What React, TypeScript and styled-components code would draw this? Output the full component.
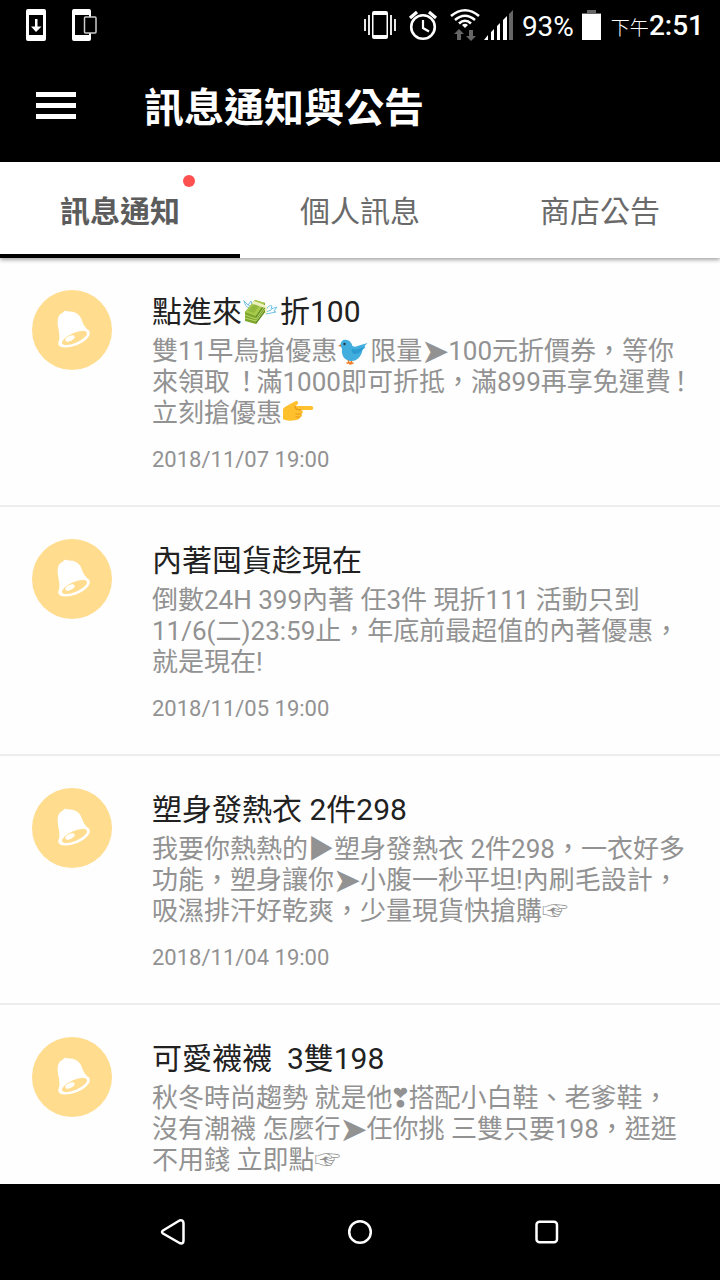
import React from "react";
import styled, { createGlobalStyle } from "styled-components";

const GlobalStyle = createGlobalStyle`
  * { box-sizing: border-box; }
  body {
    margin: 0;
    background: #000;
    font-family: Roboto, "Noto Sans CJK TC", "DejaVu Sans", sans-serif;
  }
`;

const Screen = styled.div`
  display: flex;
  flex-direction: column;
  height: 100vh;
  background: #fefefe;
`;

const StatusBar = styled.div`
  display: flex;
  align-items: center;
  justify-content: space-between;
  flex: none;
  height: 50px;
  padding: 0 16px 0 24px;
  background: #000;
  color: #fff;
  svg { display: block; flex: none; }
`;

const StatusGroup = styled.div<{ $gap: number }>`
  display: flex;
  align-items: center;
  gap: ${(p) => p.$gap}px;
`;

const StatusText = styled.span`
  padding-top: 4px;
  font-size: 28px;
  line-height: 32px;
`;

const Clock = styled.time`
  display: flex;
  align-items: baseline;
  padding: 4px 0 0 2px;
  font-size: 28px;
  line-height: 32px;
  font-weight: 500;
`;

const Meridiem = styled.span`
  font-size: 19px;
  font-weight: 300;
`;

const AppBar = styled.header`
  display: flex;
  align-items: center;
  gap: 68px;
  flex: none;
  height: 112px;
  padding: 0 36px;
  background: #000;
  color: #fff;
`;

const IconButton = styled.button`
  display: grid;
  place-items: center;
  padding: 0;
  border: 0;
  background: none;
  color: inherit;
  cursor: pointer;
  svg { display: block; }
`;

const PageTitle = styled.h1`
  margin: 0;
  padding-top: 6px;
  font-size: 40px;
  line-height: 56px;
  font-weight: 700;
`;

const Tabs = styled.nav`
  position: relative;
  z-index: 1;
  display: flex;
  flex: none;
  height: 96px;
  background: #fff;
  box-shadow: 0 2px 4px rgba(0, 0, 0, 0.35);
`;

const Tab = styled.button<{ $active?: boolean }>`
  flex: 1;
  padding: 4px 0 0;
  border: 0;
  border-top: 4px solid transparent;
  border-bottom: 4px solid ${(p) => (p.$active ? "#000" : "transparent")};
  background: none;
  color: ${(p) => (p.$active ? "#5c5c5c" : "#6a6a6a")};
  font-family: inherit;
  font-size: 30px;
  line-height: 40px;
  font-weight: ${(p) => (p.$active ? 700 : 400)};
  cursor: pointer;
`;

const TabLabel = styled.span`
  position: relative;
`;

const UnreadDot = styled.span`
  position: absolute;
  top: -19px;
  right: -15px;
  width: 12px;
  height: 12px;
  border-radius: 50%;
  background: #ff5050;
`;

const List = styled.ul`
  flex: 1;
  min-height: 0;
  margin: 0;
  padding: 0;
  overflow-y: auto;
  scrollbar-width: none;
  list-style: none;
`;

const Item = styled.li`
  display: flex;
  gap: 40px;
  padding: 32px 28px 31px 32px;
  border-bottom: 2px solid #ededed;
`;

const Avatar = styled.svg`
  flex: none;
  width: 80px;
  height: 80px;
`;

const Content = styled.div`
  flex: 1;
  min-width: 0;
`;

const ItemTitle = styled.h2`
  margin: 0 0 2px;
  color: #212121;
  font-size: 30px;
  line-height: 44px;
  font-weight: 400;
  white-space: pre-wrap;
`;

const Message = styled.p`
  margin: 0;
  color: #929292;
  font-size: 26px;
  line-height: 31px;
`;

const ItemDate = styled.time`
  display: block;
  margin-top: 17px;
  color: #929292;
  font-size: 22px;
  line-height: 28px;
`;

const Glyph = styled.span<{ $width: number; $size?: number }>`
  display: inline-flex;
  justify-content: center;
  width: ${(p) => p.$width}px;
  height: 31px;
  font-size: ${(p) => p.$size ?? 26}px;
  line-height: 31px;
  vertical-align: top;
`;

const Emoji = styled.svg<{ $size: number }>`
  width: ${(p) => p.$size}px;
  height: ${(p) => p.$size}px;
  margin: -8px 0;
  vertical-align: 1px;
`;

const NavBar = styled.nav`
  display: flex;
  align-items: center;
  justify-content: center;
  gap: 147px;
  flex: none;
  height: 96px;
  background: #000;
  color: #fff;
`;

const Arrow = () => <Glyph $width={26} $size={34}>➤</Glyph>;
const Bang = () => <Glyph $width={20}>！</Glyph>;
const Pointer = () => <Glyph $width={26}>☞</Glyph>;

const MoneyEmoji = () => (
  <Emoji $size={38} viewBox="0 0 38 38" role="img" aria-label="💸">
    <g fill="none" stroke="#6fc3e6" strokeWidth="1" strokeLinecap="round">
      <path d="M2 10l4 4 3-4 1 4M2 10c1 4 2 6 5 7M5 13l4 3" />
      <path d="M24 19c2-4 4-5 6-4l-1 3 6-2-3 4 2 1-5 1-5 1M24 21l5-2" />
    </g>
    <path d="M3 21L13 9l10 3v9l-9 12-11-3z" fill="#7ea62f" />
    <path d="M3 21L13 9l10 3-9 13z" fill="#a8ca4c" />
    <path d="M14 25l9-13v9l-9 12z" fill="#658f27" />
    <path d="M3 24l11 4 9-13M3 27l11 3 9-12" stroke="#bcd866" strokeWidth="1" fill="none" />
    <path d="M10 13l2-3 11 4 2 2v6l-2 2v-7z" fill="#eef0c0" />
    <path d="M6 20l6-7 5 2-5 7z" fill="#7ea62f" opacity="0.500" />
  </Emoji>
);

const BirdEmoji = () => (
  <Emoji $size={33} viewBox="0 0 33 33" role="img" aria-label="🐦">
    <path d="M11 25l1 4M15 25l-1 4M10 29h3M13 30l3-1" stroke="#f57c20" strokeWidth="1.500" strokeLinecap="round" fill="none" />
    <path d="M4 10l-3 2 4 1z" fill="#e8782a" />
    <path d="M3.500 11c0-4 3-6 6-5 3 0 5 3 6 6 2 1 3 1 5 0l10-3-3 3 1 1-3 3c-1 6-5 11-11 11C8 27 4 22 5 15z" fill="#42aede" />
    <path d="M15 15c4 1 8 0 12-2-2 4-5 7-9 7-2 0-4-2-3-5z" fill="#2c9bd2" />
    <circle cx="7.500" cy="10" r="1.200" fill="#243642" />
  </Emoji>
);

const HandEmoji = () => (
  <Emoji $size={33} viewBox="0 0 33 33" role="img" aria-label="👉">
    <path d="M1 13c2-3 6-4 9-6l4-2c2 0 3 2 1 4l-2 1h16c3 0 3 4 0 4H19c3 1 2 4 0 4 2 1 1 3-1 3 0 2-2 3-4 3C9 25 4 25 1 23z" fill="#ffc02e" />
    <path d="M13 10c0 3 2 4 6 4M14 18h5M14 21h4" fill="none" stroke="#e59618" strokeWidth="1.2" strokeLinecap="round" />
  </Emoji>
);

const BellAvatar = () => (
  <Avatar viewBox="0 0 80 80" aria-hidden="true">
    <circle cx="40" cy="40" r="40" fill="#ffdc8e" />
    <path
      d="M31 22.500c1-2 3-2 5-1 5-.5 9 1 12 5 3 5 3 10 9 14 2 3 0 7-4 10-5 4-13 7-20 7-6 0-8-3-6-7 1-3 0-9-1-14-1-7 0-12 5-14z"
      fill="#fff"
    />
    <ellipse cx="42.500" cy="48" rx="13.500" ry="5" transform="rotate(-24 42.500 48)" fill="#ffdc8e" />
    <ellipse cx="38" cy="48.500" rx="5" ry="2.500" transform="rotate(-26 38 48.500)" fill="#fff" />
  </Avatar>
);

type Notice = {
  id: number;
  title: React.ReactNode;
  body: React.ReactNode;
  date?: string;
};

const notices: Notice[] = [
  {
    id: 1,
    title: <>點進來<MoneyEmoji />折100</>,
    body: (
      <>
        雙11早鳥搶優惠<BirdEmoji />限量<Arrow />100元折價券，等你來領取 <Bang />滿1000即可折抵，滿899再享免運費<Bang />立刻搶優惠<HandEmoji />
      </>
    ),
    date: "2018/11/07 19:00",
  },
  {
    id: 2,
    title: "內著囤貨趁現在",
    body: "倒數24H 399內著 任3件 現折111 活動只到11/6(二)23:59止，年底前最超值的內著優惠，就是現在!",
    date: "2018/11/05 19:00",
  },
  {
    id: 3,
    title: "塑身發熱衣 2件298",
    body: (
      <>
        我要你熱熱的<Glyph $width={26}>▶</Glyph>塑身發熱衣 2件298，一衣好多功能，塑身讓你<Arrow />小腹一秒平坦!內刷毛設計，吸濕排汗好乾爽，少量現貨快搶購<Pointer />
      </>
    ),
    date: "2018/11/04 19:00",
  },
  {
    id: 4,
    title: "可愛襪襪  3雙198",
    body: (
      <>
        秋冬時尚趨勢 就是他<Glyph $width={16}>❣</Glyph>搭配小白鞋、老爹鞋，沒有潮襪 怎麼行<Arrow />任你挑 三雙只要198，逛逛不用錢 立即點<Pointer />
      </>
    ),
  },
];

const DownloadIcon = () => (
  <svg width="24" height="34" viewBox="0 0 24 34" aria-hidden="true">
    <path fillRule="evenodd" fill="#fff" d="M4 1h16a2 2 0 0 1 2 2v28a2 2 0 0 1-2 2H4a2 2 0 0 1-2-2V3a2 2 0 0 1 2-2zM5 7v20h14V7z" />
    <path fill="#fff" d="M11 11h2.500v7.500H17.500L12 24 7 18.500h4z" />
  </svg>
);

const DevicesIcon = () => (
  <svg width="28" height="34" viewBox="0 0 28 34" aria-hidden="true">
    <path fillRule="evenodd" fill="#fff" d="M4 1h15a2 2 0 0 1 2 2v28a2 2 0 0 1-2 2H4a2 2 0 0 1-2-2V3a2 2 0 0 1 2-2zM5 7v20h14V7z" />
    <rect x="14.500" y="9" width="11.500" height="16" rx="1" fill="#000" stroke="#ccc" strokeWidth="1.500" />
  </svg>
);

const VibrateIcon = () => (
  <svg width="32" height="32" viewBox="0 0 32 32" aria-hidden="true">
    <path fillRule="evenodd" fill="#fff" d="M10 2h12a2 2 0 0 1 2 2v24a2 2 0 0 1-2 2H10a2 2 0 0 1-2-2V4a2 2 0 0 1 2-2zM9.500 6v20h13V6z" />
    <path d="M1 10v12M5 6v20M27 6v20M31 10v12" stroke="#fff" strokeWidth="1.800" />
  </svg>
);

const AlarmIcon = () => (
  <svg width="30" height="32" viewBox="0 0 30 32" fill="none" stroke="#fff" aria-hidden="true">
    <circle cx="15" cy="18" r="11.800" strokeWidth="2.600" />
    <path d="M2 9l7-6M28 9l-7-6" strokeWidth="3.200" />
    <path d="M15 11v8l6 3.500" strokeWidth="2.200" />
  </svg>
);

const WifiIcon = () => (
  <svg width="30" height="34" viewBox="0 0 30 34" fill="none" aria-hidden="true">
    <g stroke="#fff" strokeWidth="2.600">
      <path d="M1 8Q15-3.500 29 8" />
      <path d="M5 12Q15 3.500 25 12" />
      <path d="M9 15.500Q15 10 21 15.500" />
    </g>
    <path d="M12 17Q15 14.500 18 17L15 20z" fill="#fff" />
    <path d="M9 21l5 5h-3v6H7v-6H4zM21 33l-5-5h3v-6h4v6h3z" fill="#666" />
  </svg>
);

const SignalIcon = () => (
  <svg width="30" height="32" viewBox="0 0 30 32" aria-hidden="true">
    <path d="M0 31l4-5v5zM7 31v-8l3-3v11zM13 31V17l3-3v17zM19 31V11l4-4v24z" fill="#fff" />
    <path d="M25 31V5l4-4v30z" fill="#666" />
  </svg>
);

const BatteryIcon = () => (
  <svg width="19" height="30" viewBox="0 0 19 30" aria-hidden="true">
    <path d="M5 0h9v3h5v3H0V3h5z" fill="#666" />
    <path d="M0 4h19v26H0z" fill="#fff" />
  </svg>
);

export default function App() {
  return (
    <>
      <GlobalStyle />
      <Screen>
        <StatusBar>
          <StatusGroup $gap={22}>
            <DownloadIcon />
            <DevicesIcon />
          </StatusGroup>
          <StatusGroup $gap={8}>
            <StatusGroup $gap={12}>
              <VibrateIcon />
              <AlarmIcon />
              <StatusGroup $gap={4}>
                <WifiIcon />
                <SignalIcon />
              </StatusGroup>
            </StatusGroup>
            <StatusText>93%</StatusText>
            <BatteryIcon />
            <Clock>
              <Meridiem>下午</Meridiem>2:51
            </Clock>
          </StatusGroup>
        </StatusBar>
        <AppBar>
          <IconButton aria-label="選單">
            <svg width="40" height="28" viewBox="0 0 40 28" fill="#fff">
              <path d="M0 0h40v5H0zM0 11h40v5H0zM0 22h40v5H0z" />
            </svg>
          </IconButton>
          <PageTitle>訊息通知與公告</PageTitle>
        </AppBar>
        <Tabs>
          <Tab $active>
            <TabLabel>
              訊息通知
              <UnreadDot />
            </TabLabel>
          </Tab>
          <Tab>個人訊息</Tab>
          <Tab>商店公告</Tab>
        </Tabs>
        <List>
          {notices.map((n) => (
            <Item key={n.id}>
              <BellAvatar />
              <Content>
                <ItemTitle>{n.title}</ItemTitle>
                <Message>{n.body}</Message>
                {n.date && <ItemDate>{n.date}</ItemDate>}
              </Content>
            </Item>
          ))}
        </List>
        <NavBar>
          <IconButton aria-label="返回">
            <svg width="40" height="40" viewBox="0 0 40 40" fill="none" stroke="#fff" strokeWidth="2.500" strokeLinejoin="round">
              <path d="M10 18.500L26.500 8.500Q30.500 7.500 30.500 11.500V28.500Q30.500 32.500 26.500 31L10 21.500Q8 20 10 18.500z" />
            </svg>
          </IconButton>
          <IconButton aria-label="首頁">
            <svg width="40" height="40" viewBox="0 0 40 40" fill="none" stroke="#fff" strokeWidth="2.500">
              <circle cx="20" cy="20" r="10.800" />
            </svg>
          </IconButton>
          <IconButton aria-label="最近使用">
            <svg width="40" height="40" viewBox="0 0 40 40" fill="none" stroke="#fff" strokeWidth="2.500">
              <rect x="9.500" y="9.800" width="20.500" height="20.500" rx="3" />
            </svg>
          </IconButton>
        </NavBar>
      </Screen>
    </>
  );
}
